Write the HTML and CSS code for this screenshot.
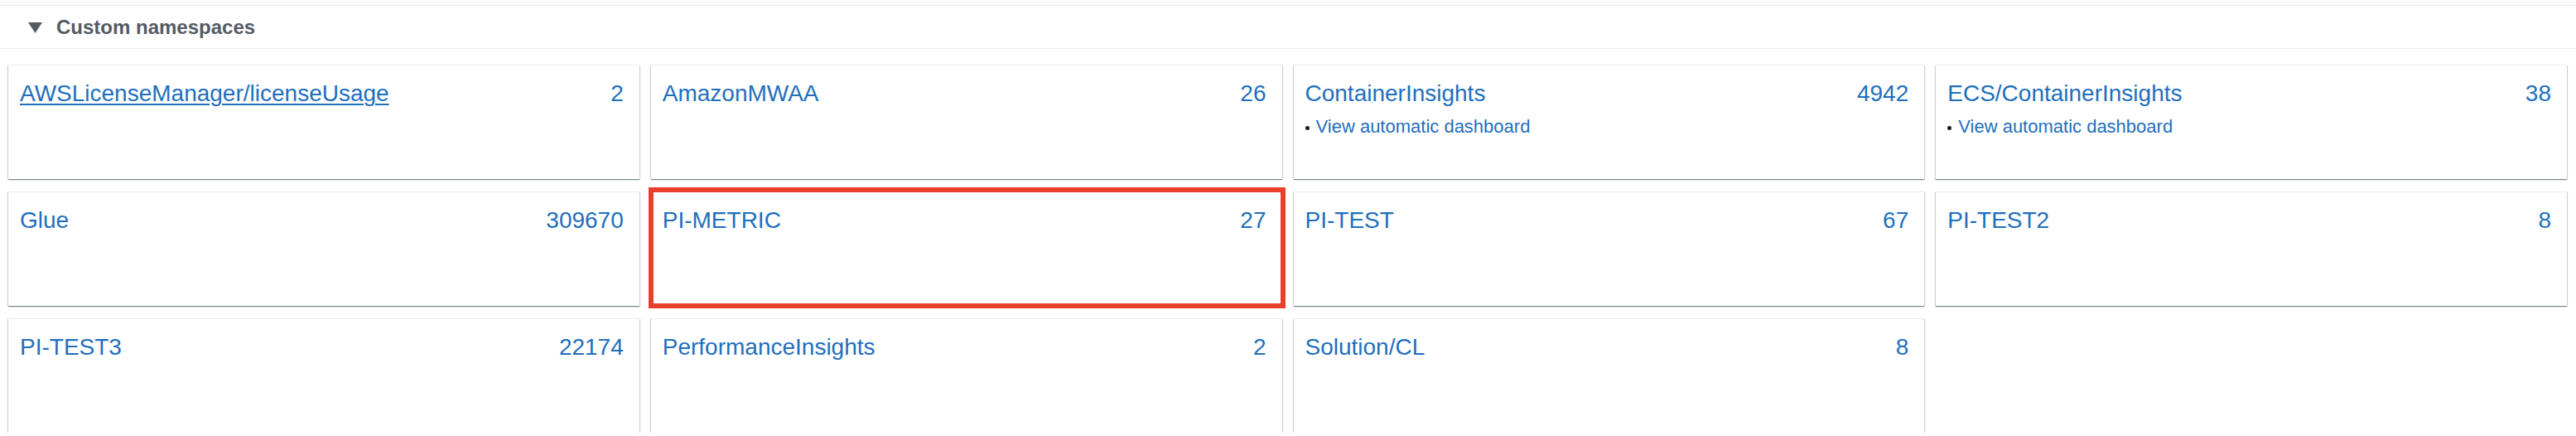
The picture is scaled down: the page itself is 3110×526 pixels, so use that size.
FILE: index.html
```html
<!DOCTYPE html>
<html lang="en">
<head>
<meta charset="utf-8">
<title>Custom namespaces</title>
<link rel="stylesheet" href="styles.css">
</head>
<body>
<div class="topstrip"></div>
<section class="section">
  <div class="section-header">
    <svg class="caret" width="17" height="13" viewBox="0 0 17 13" aria-hidden="true"><polygon points="0,0 17,0 8.5,13" fill="#545b64"/></svg>
    <h2 class="section-title">Custom namespaces</h2>
  </div>
  <div class="grid">
    <div class="card">
      <div class="card-head"><a class="ns ns-hover" href="#">AWSLicenseManager/licenseUsage</a><span class="count">2</span></div>
    </div>
    <div class="card">
      <div class="card-head"><a class="ns" href="#">AmazonMWAA</a><span class="count">26</span></div>
    </div>
    <div class="card">
      <div class="card-head"><a class="ns" href="#">ContainerInsights</a><span class="count">4942</span></div>
      <ul class="links"><li><span class="dot"></span><a href="#">View automatic dashboard</a></li></ul>
    </div>
    <div class="card">
      <div class="card-head"><a class="ns" href="#">ECS/ContainerInsights</a><span class="count">38</span></div>
      <ul class="links"><li><span class="dot"></span><a href="#">View automatic dashboard</a></li></ul>
    </div>
    <div class="card">
      <div class="card-head"><a class="ns" href="#">Glue</a><span class="count">309670</span></div>
    </div>
    <div class="card card-marked">
      <div class="card-head"><a class="ns" href="#">PI-METRIC</a><span class="count">27</span></div>
    </div>
    <div class="card">
      <div class="card-head"><a class="ns" href="#">PI-TEST</a><span class="count">67</span></div>
    </div>
    <div class="card">
      <div class="card-head"><a class="ns" href="#">PI-TEST2</a><span class="count">8</span></div>
    </div>
    <div class="card">
      <div class="card-head"><a class="ns" href="#">PI-TEST3</a><span class="count">22174</span></div>
    </div>
    <div class="card">
      <div class="card-head"><a class="ns" href="#">PerformanceInsights</a><span class="count">2</span></div>
    </div>
    <div class="card">
      <div class="card-head"><a class="ns" href="#">Solution/CL</a><span class="count">8</span></div>
    </div>
  </div>
</section>
</body>
</html>
```
FILE: styles.css
```css
html, body {
  margin: 0;
  padding: 0;
  background: #ffffff;
  font-family: "Liberation Sans", Arial, sans-serif;
}

.topstrip {
  height: 6px;
  background: #fafafa;
  border-bottom: 1px solid #eaeded;
}

.section-header {
  display: flex;
  align-items: center;
  gap: 17px;
  padding-left: 34px;
  border-bottom: 1px solid #eaeded;
  box-sizing: border-box;
  height: 52px;
}

.caret {
  display: block;
  margin-top: 1px;
}

.section-title {
  margin: 0;
  font-size: 24px;
  font-weight: 700;
  color: #545b64;
  line-height: 1;
}

.grid {
  display: grid;
  grid-template-columns: repeat(4, 1fr);
  grid-auto-rows: 138px;
  column-gap: 14px;
  row-gap: 15px;
  padding: 19px 11px 0 10px;
}

.card {
  position: relative;
  background: #ffffff;
  border-top: 1px solid #eaeded;
  box-shadow: 0 1px 1px 0 rgba(0, 28, 36, 0.35), 1px 1px 1px 0 rgba(0, 28, 36, 0.15), -1px 1px 1px 0 rgba(0, 28, 36, 0.15);
  padding: 13px 19px 0 14px;
  box-sizing: border-box;
}

.card-marked::after {
  content: "";
  position: absolute;
  top: -6px;
  bottom: -3px;
  left: -3px;
  right: -4px;
  border: 6px solid #e8402a;
  pointer-events: none;
}

.card-head {
  display: flex;
  justify-content: space-between;
  align-items: baseline;
  font-size: 28px;
  line-height: 42px;
  color: #1f6fbd;
}

.ns {
  color: #1f6fbd;
  text-decoration: none;
}

.ns-hover {
  text-decoration: underline;
  text-decoration-thickness: 2px;
  text-underline-offset: 3px;
}

.count {
  color: #1f6fbd;
}

.links {
  list-style: none;
  margin: 2px 0 0;
  padding: 0;
  font-size: 22px;
  line-height: 33px;
}

.links li {
  display: flex;
  align-items: center;
  gap: 8px;
}

.links a {
  color: #1f6fbd;
  text-decoration: none;
}

.dot {
  width: 5px;
  height: 5px;
  border-radius: 50%;
  background: #16191f;
  margin-top: 3px;
}
```
